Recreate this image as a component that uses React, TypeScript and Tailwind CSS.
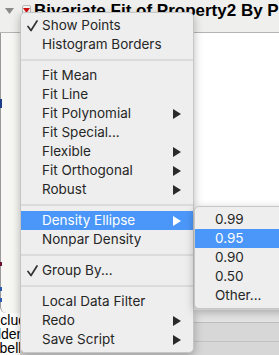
import React from "react";

const Arrow = ({ white }: { white?: boolean }) => (
  <svg width="8" height="10" viewBox="0 0 8 10" className="block">
    <path d="M0 0 L8 5 L0 10 Z" fill={white ? "#ffffff" : "#2a2a2a"} />
  </svg>
);

const Check = () => (
  <svg width="11" height="12" viewBox="0 0 11 12" className="block">
    <path d="M1 6.5 L4 10.5 L10 1" fill="none" stroke="#333333" strokeWidth="1.7" strokeLinecap="round" strokeLinejoin="round" />
  </svg>
);

type Item = { label: string; check?: boolean; arrow?: boolean; active?: boolean } | "sep";

const mainItems: Item[] = [
  { label: "Show Points", check: true },
  { label: "Histogram Borders" },
  "sep",
  { label: "Fit Mean" },
  { label: "Fit Line" },
  { label: "Fit Polynomial", arrow: true },
  { label: "Fit Special..." },
  { label: "Flexible", arrow: true },
  { label: "Fit Orthogonal", arrow: true },
  { label: "Robust", arrow: true },
  "sep",
  { label: "Density Ellipse", arrow: true, active: true },
  { label: "Nonpar Density" },
  "sep",
  { label: "Group By...", check: true },
  "sep",
  { label: "Local Data Filter" },
  { label: "Redo", arrow: true },
  { label: "Save Script", arrow: true },
];

const subItems = ["0.99", "0.95", "0.90", "0.50", "Other..."];

const Row = ({ item }: { item: Exclude<Item, "sep"> }) => (
  <div
    className={`flex h-[19px] items-center pr-[12px] ${item.active ? "bg-[#4b97f9] text-white" : "text-[#262626]"}`}
  >
    <div className="flex w-[21px] shrink-0 items-center pl-[6px]">{item.check ? <Check /> : null}</div>
    <div className="flex-1 whitespace-nowrap">{item.label}</div>
    {item.arrow ? <Arrow white={item.active} /> : null}
  </div>
);

export default function App() {
  return (
    <div
      className="relative h-[355px] w-[279px] overflow-hidden bg-white"
      style={{ fontFamily: "Inter, 'Liberation Sans', sans-serif" }}
    >
      {/* header band */}
      <div className="flex h-[33px] items-start border-b border-[#b4b4b4] bg-[#efefed]">
        <div className="ml-[5px] mt-[8px]">
          <svg width="9" height="6" viewBox="0 0 9 6" className="block">
            <path d="M0 0 L9 0 L4.5 6 Z" fill="#8a8a8a" />
          </svg>
        </div>
        <div className="ml-[8px] mt-[5px] flex h-[11px] w-[11px] items-start justify-center rounded-[2px] border border-[#b8b8b8] bg-[#f6f6f6] pt-[2px]">
          <svg width="7" height="5" viewBox="0 0 7 5" className="block">
            <path d="M0 0 L7 0 L3.5 5 Z" fill="#d01010" />
          </svg>
        </div>
        <div
          className="ml-[3px] mt-[1px] whitespace-nowrap text-[17px] font-bold leading-[20px] text-black"
          style={{ fontFamily: "'Liberation Sans', Arial, sans-serif" }}
        >
          Bivariate Fit of Property2 By Property1
        </div>
      </div>

      {/* body */}
      <div className="flex h-[322px]">
        <div className="flex w-[20px] shrink-0 flex-col">
          <div className="relative h-[284px] rounded-bl-[6px] border-l border-[#9a9a9a] bg-[#f7f7f4]">
            <div className="absolute left-[-1px] top-[66px] h-[9px] w-[2px] bg-[#1d3d8a]" />
            <div className="absolute left-[-1px] top-[229px] h-[4px] w-[2px] bg-[#6a1030]" />
            <div className="absolute left-[-1px] top-[254px] h-[4px] w-[2px] bg-[#2a5ab0]" />
            <div className="absolute left-[-1px] top-[265px] h-[4px] w-[2px] bg-[#2a5ab0]" />
          </div>
          <div
            className="flex flex-col text-[14px] leading-[14px] text-black"
            style={{ fontFamily: "'Liberation Sans', Arial, sans-serif" }}
          >
            <div className="ml-[-16px] whitespace-nowrap">Excluded</div>
            <div className="ml-[-20px] whitespace-nowrap">Hidden</div>
            <div className="ml-[-16px] whitespace-nowrap">Labelled</div>
          </div>
        </div>
        <div className="flex flex-1 flex-col">
          <div className="h-[277px] bg-white" />
          <div className="h-[13px] border-b border-[#bdbdbd] bg-[#e3e3e3]" />
          <div className="h-[19px] border-b border-[#c2c2c2] bg-[#d7d7d7]" />
          <div className="flex-1 bg-[#d7d7d7]" />
        </div>
      </div>

      {/* main menu */}
      <div className="absolute left-[20px] top-[12px] w-[174px] rounded-[5px] border border-[#c6c6c6] bg-[#eeeeee] py-[3px] text-[13.5px] shadow-[0_3px_10px_rgba(0,0,0,0.28)]">
        {mainItems.map((it, i) =>
          it === "sep" ? (
            <div key={i} className="flex h-[12px] items-center">
              <div className="h-[2px] w-full bg-[#dbdbdb]" />
            </div>
          ) : (
            <Row key={i} item={it} />
          )
        )}
      </div>

      {/* submenu */}
      <div className="absolute left-[194px] top-[206px] w-[96px] rounded-[5px] border border-[#c6c6c6] bg-[#eeeeee] py-[3px] text-[13.5px] shadow-[0_3px_10px_rgba(0,0,0,0.28)]">
        {subItems.map((s) => (
          <div
            key={s}
            className={`flex h-[19px] items-center pl-[20px] ${s === "0.95" ? "bg-[#4b97f9] text-white" : "text-[#262626]"}`}
          >
            {s}
          </div>
        ))}
      </div>
    </div>
  );
}
